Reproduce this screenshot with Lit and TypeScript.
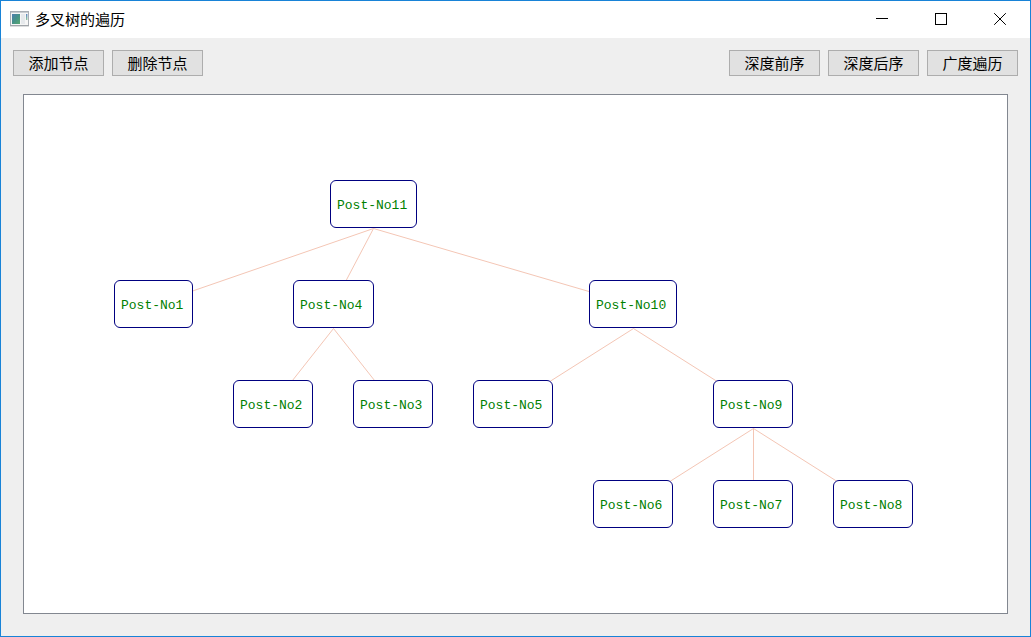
import { LitElement, html, css, svg } from "lit";
import { customElement, property } from "lit/decorators.js";

interface TreeNode {
  id: number;
  x: number;
  y: number;
  width: number;
  parent?: number;
}

const NODE_HEIGHT = 48;
const SCENE_WIDTH = 803;
const SCENE_HEIGHT = 348;

// Positions are scene coordinates of each box's top left corner.
const NODES: TreeNode[] = [
  { id: 11, x: 216, y: 0, width: 87 },
  { id: 1, x: 0, y: 100, width: 79, parent: 11 },
  { id: 4, x: 179, y: 100, width: 81, parent: 11 },
  { id: 10, x: 475, y: 100, width: 88, parent: 11 },
  { id: 2, x: 119, y: 200, width: 80, parent: 4 },
  { id: 3, x: 239, y: 200, width: 80, parent: 4 },
  { id: 5, x: 359, y: 200, width: 80, parent: 10 },
  { id: 9, x: 599, y: 200, width: 80, parent: 10 },
  { id: 6, x: 479, y: 300, width: 80, parent: 9 },
  { id: 7, x: 599, y: 300, width: 80, parent: 9 },
  { id: 8, x: 719, y: 300, width: 80, parent: 9 },
];

@customElement("tree-view")
export class TreeView extends LitElement {
  @property({ attribute: false }) nodes: TreeNode[] = [];

  static styles = css`
    :host {
      display: flex;
      align-items: center;
      justify-content: center;
      overflow: auto;
      background: #fff;
      border: 1px solid #828790;
    }
    .scene {
      position: relative;
      flex: none;
    }
    .edges {
      display: block;
      stroke: #f4c6b5;
      stroke-width: 1;
      fill: none;
    }
    .node {
      position: absolute;
      box-sizing: border-box;
      display: flex;
      align-items: center;
      padding: 3px 0 0 6px;
      border: 1px solid #000080;
      border-radius: 6px;
      background: #fff;
      color: #008000;
      font: 13px/16px "Liberation Mono", monospace;
      white-space: nowrap;
    }
  `;

  private edge(node: TreeNode) {
    const parent = this.nodes.find((n) => n.id === node.parent);
    if (!parent) return null;
    const centre = (n: TreeNode) => Math.floor(n.x + n.width / 2) + 0.5;
    return svg`<line
      x1=${centre(parent)} y1=${parent.y + NODE_HEIGHT + 0.5}
      x2=${centre(node)} y2=${node.y + NODE_HEIGHT / 2 + 0.5}></line>`;
  }

  render() {
    return html`
      <div class="scene">
        <svg class="edges" width=${SCENE_WIDTH} height=${SCENE_HEIGHT} aria-hidden="true">
          ${this.nodes.map((n) => this.edge(n))}
        </svg>
        ${this.nodes.map(
          (n) => html`<div
            class="node"
            style="left:${n.x}px;top:${n.y}px;width:${n.width}px;height:${NODE_HEIGHT}px"
          >Post-No${n.id}</div>`
        )}
      </div>
    `;
  }
}

@customElement("app-root")
export class AppRoot extends LitElement {
  static styles = css`
    :host {
      display: flex;
      flex-direction: column;
      box-sizing: border-box;
      min-height: 100vh;
      border: 1px solid #1883d7;
      background: #efefef;
      color: #000;
      font: 15px/20px "Noto Sans CJK SC", sans-serif;
    }
    .titlebar {
      display: flex;
      align-items: center;
      box-sizing: border-box;
      height: 37px;
      padding: 0 1px 2px 9px;
      background: #fff;
    }
    .app-icon {
      flex: none;
      margin-right: 5px;
    }
    .title {
      flex: 1;
      margin: 0;
      font-size: 15px;
      font-weight: inherit;
    }
    .window-button {
      display: flex;
      align-items: center;
      justify-content: center;
      width: 59px;
      height: 35px;
      padding: 0;
      border: 0;
      background: none;
    }
    .window-button svg {
      fill: none;
      stroke: #000;
    }
    .toolbar {
      display: flex;
      justify-content: space-between;
      padding: 12px 12px 18px;
    }
    .group {
      display: flex;
      gap: 8px;
    }
    .button {
      box-sizing: border-box;
      width: 91px;
      height: 26px;
      padding: 0;
      border: 1px solid #adadad;
      background: #e1e1e1;
      color: #000;
      font: inherit;
    }
    .view {
      flex: 1;
      margin: 0 22px 22px;
    }
  `;

  render() {
    return html`
      <header class="titlebar">
        <svg class="app-icon" width="20" height="16" viewBox="0 0 20 16" aria-hidden="true">
          <defs>
            <linearGradient id="screen" x1="0" y1="0" x2="1" y2="1">
              <stop offset="0" stop-color="#4f7db0"></stop>
              <stop offset="0.5" stop-color="#459287"></stop>
              <stop offset="1" stop-color="#5aa872"></stop>
            </linearGradient>
            <linearGradient id="meter" x1="0" y1="0" x2="0" y2="1">
              <stop offset="0" stop-color="#5f86c4"></stop>
              <stop offset="1" stop-color="#8fc79a"></stop>
            </linearGradient>
          </defs>
          <rect x="0.5" y="0.5" width="18" height="14" fill="#f6f6f6" stroke="#a9aeb4"></rect>
          <path d="M1 1.5h17" stroke="#c9cdd1"></path>
          <path d="M0 15h19" stroke="#8d9196" stroke-width="0.6"></path>
          <rect x="2" y="3" width="8" height="10" fill="url(#screen)"></rect>
          <rect x="11" y="3" width="4" height="10" fill="#e6e9ec"></rect>
          <rect x="16" y="3" width="1.4" height="6" fill="url(#meter)"></rect>
        </svg>
        <h1 class="title">多叉树的遍历</h1>
        <button class="window-button" aria-label="最小化">
          <svg width="12" height="12"><path d="M0 5.5h12"></path></svg>
        </button>
        <button class="window-button" aria-label="最大化">
          <svg width="12" height="12"><rect x="0.5" y="0.5" width="11" height="11"></rect></svg>
        </button>
        <button class="window-button" aria-label="关闭">
          <svg width="12" height="12"><path d="M0.2 0.2L11.8 11.8M11.8 0.2L0.2 11.8"></path></svg>
        </button>
      </header>
      <nav class="toolbar">
        <div class="group">
          <button class="button">添加节点</button>
          <button class="button">删除节点</button>
        </div>
        <div class="group">
          <button class="button">深度前序</button>
          <button class="button">深度后序</button>
          <button class="button">广度遍历</button>
        </div>
      </nav>
      <tree-view class="view" .nodes=${NODES}></tree-view>
    `;
  }
}
